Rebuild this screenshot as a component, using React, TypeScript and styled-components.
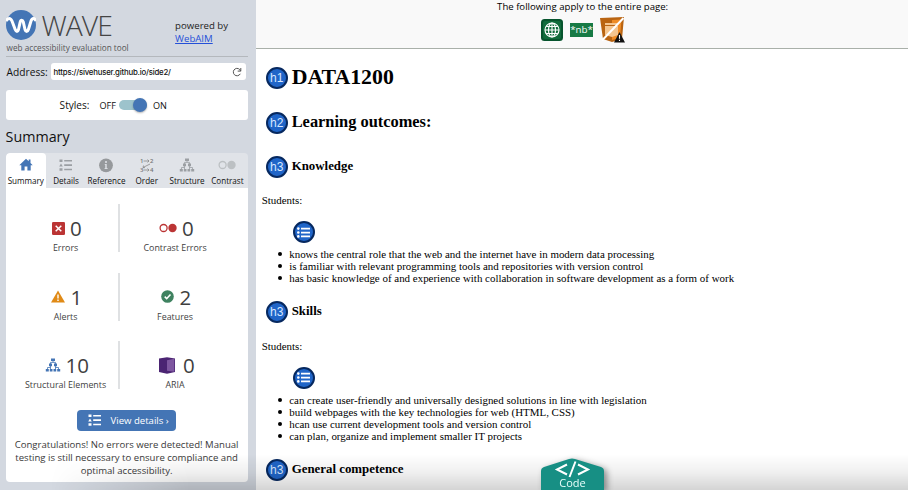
import React from "react";
import styled, { createGlobalStyle } from "styled-components";

const GlobalStyle = createGlobalStyle`
  html, body { margin: 0; padding: 0; overflow: hidden; background: #fff; }
  *, *::before, *::after { box-sizing: border-box; }
`;

const sans = `"Open Sans", "Noto Sans", sans-serif`;

const Page = styled.div`
  position: relative;
  display: flex;
  width: 908px;
  height: 490px;
  overflow: hidden;
  font-family: ${sans};
  color: #111;
`;

const Sidebar = styled.aside`
  flex: 0 0 256px;
  height: 490px;
  padding: 0 8.6px 0 5.6px;
  background: #d3d8e0;
`;

const Header = styled.header`
  display: flex;
  justify-content: space-between;
  height: 57px;
  border-bottom: 1px solid #b4b8bd;
`;

const Brand = styled.div`
  padding-top: 10px;
`;

const LogoRow = styled.div`
  display: flex;
  align-items: center;
  height: 30px;
  gap: 6px;
`;

const Wordmark = styled.span`
  font-weight: 300;
  font-size: 28.3px;
  line-height: 30px;
  letter-spacing: -1px;
  color: #444;
`;

const Tagline = styled.div`
  padding-left: 1px;
  font-size: 8.2px;
  line-height: 15px;
  white-space: nowrap;
  color: #555;
`;

const Powered = styled.div`
  width: 72.5px;
  padding-top: 19px;
  font-size: 9.65px;
  line-height: 13px;
  color: #222;
`;

const AimLink = styled.a`
  color: #2450d8;
  text-decoration: underline;
`;

const AddressRow = styled.div`
  display: flex;
  align-items: center;
  height: 29px;
  padding-left: 1px;
  font-size: 10.2px;
`;

const AddressField = styled.div`
  display: flex;
  align-items: center;
  justify-content: space-between;
  width: 195px;
  height: 17px;
  margin-left: auto;
  margin-right: 2px;
  padding: 0 4px 0 3px;
  border-radius: 3px;
  background: #fff;
  font-family: Inter, sans-serif;
  font-size: 7.8px;
  font-weight: 500;
  letter-spacing: -0.2px;
`;

const StylesBox = styled.div`
  display: flex;
  align-items: center;
  height: 30px;
  margin-top: 4px;
  padding-left: 54px;
  border-radius: 3px;
  background: #fff;
  font-size: 10.1px;
`;

const StateLabel = styled.span<{ $gap: number }>`
  margin-left: ${(p) => p.$gap}px;
  font-size: 9.1px;
`;

const Switch = styled.div`
  display: flex;
  align-items: center;
  justify-content: flex-end;
  width: 28px;
  height: 10px;
  margin-left: 3px;
  border-radius: 5px;
  background: #9dc3cc;
`;

const Knob = styled.div`
  width: 14px;
  height: 14px;
  border-radius: 50%;
  background: #4475b5;
  box-shadow: 0 1px 2px rgba(0, 0, 0, 0.3);
`;

const Title = styled.h2`
  height: 33px;
  margin: 0;
  font-size: 14.3px;
  font-weight: 400;
  line-height: 34px;
`;

const Tabs = styled.nav`
  display: grid;
  grid-template-columns: repeat(6, 1fr);
  height: 35px;
  border-radius: 4px 4px 0 0;
  overflow: hidden;
  background: #e0e3e8;
`;

const Tab = styled.div<{ $active?: boolean }>`
  display: flex;
  flex-direction: column;
  align-items: center;
  padding-top: 4px;
  border-radius: 4px 4px 0 0;
  background: ${(p) => (p.$active ? "#fff" : "transparent")};
  font-size: 8.1px;
  line-height: 12px;
  white-space: nowrap;

  svg {
    margin-bottom: 2px;
  }
`;

const Panel = styled.section`
  height: 294px;
  padding-top: 16px;
  border-radius: 0 0 4px 4px;
  background: #fff;
`;

const Stats = styled.div`
  display: grid;
  grid-template-columns: 114px 128px;
  grid-auto-rows: 48px;
  row-gap: 20.5px;
`;

const Stat = styled.div<{ $left?: boolean }>`
  display: flex;
  flex-direction: column;
  align-items: center;
  padding-top: 10px;
  border-right: ${(p) => (p.$left ? "2px solid #dfe1e3" : "0")};
  padding-left: ${(p) => (p.$left ? "8px" : "0")};
  padding-right: ${(p) => (p.$left ? "0" : "17px")};
  color: #3f3f3f;
`;

const StatValue = styled.div`
  display: flex;
  align-items: center;
  gap: 5px;
  height: 30px;
  padding-left: 2.5px;
  font-size: 20.5px;
  line-height: 28px;
`;

const StatLabel = styled.div`
  font-size: 8.9px;
  line-height: 12px;
  white-space: nowrap;
`;

const DetailsButton = styled.button`
  display: flex;
  align-items: center;
  gap: 7.5px;
  width: 99px;
  height: 21px;
  margin: 20.5px auto 0 71.4px;
  padding: 0 0 0 10px;
  border: 0;
  border-radius: 4px;
  background: #4475b5;
  color: #fff;
  font: 9.6px ${sans};
  white-space: nowrap;
`;

const Message = styled.p`
  margin: 7px 0 0;
  font-size: 9.58px;
  line-height: 13px;
  text-align: center;
  white-space: nowrap;
  color: #3a3a3a;
`;

const Main = styled.main`
  flex: 1;
  height: 490px;
  overflow: hidden;
  background: #fff;
  font-family: "Liberation Serif", "Times New Roman", serif;
  font-size: 10.94px;
  color: #000;
`;

const PageBar = styled.div`
  display: flex;
  flex-direction: column;
  align-items: center;
  height: 49px;
  padding-left: 1px;
  border-bottom: 1px solid #a9b0a9;
  background: #f9f9f9;
  font-family: ${sans};
  font-size: 9.6px;
  line-height: 13px;
`;

const BarIcons = styled.div`
  display: flex;
  align-items: center;
  gap: 7px;
  height: 26px;
  margin-top: 4px;
  padding-left: 1px;
`;

const LangTag = styled.span`
  width: 23px;
  height: 14px;
  background: #177a45;
  color: #fff;
  font-size: 9.8px;
  line-height: 14px;
  text-align: center;
`;

const Heading = styled.div<{ $height: number; $size: number }>`
  display: flex;
  align-items: center;
  gap: 4px;
  height: ${(p) => p.$height}px;
  padding-left: 9.5px;
  font-size: ${(p) => p.$size}px;
  font-weight: 700;
`;

const Badge = styled.span`
  display: flex;
  align-items: center;
  justify-content: center;
  width: 22px;
  height: 22px;
  margin-top: 1.5px;
  border: 2.5px solid #06285f;
  border-radius: 50%;
  background: #2065c8;
  color: #d9e8ff;
  font-family: "Liberation Sans", Arial, sans-serif;
  font-size: 12px;
  font-weight: 400;
  line-height: 16px;
`;

const Paragraph = styled.p`
  height: 14px;
  margin: 0 0 14px;
  padding-left: 5.5px;
  line-height: 14px;
`;

const ListBadge = styled(Badge)`
  margin: 0 0 5px 36.5px;
`;

const List = styled.ul`
  margin: 0;
  padding: 0;
  list-style: none;
`;

const Item = styled.li`
  display: flex;
  align-items: center;
  gap: 7px;
  padding-left: 22px;
  line-height: 12.2px;
  height: 12.2px;

  &::before {
    content: "";
    width: 4px;
    height: 4px;
    border-radius: 50%;
    background: #000;
  }
`;

const BottomShade = styled.div`
  position: absolute;
  left: 0;
  right: 0;
  bottom: 0;
  height: 36px;
  background: linear-gradient(to bottom, rgba(0, 0, 0, 0), rgba(0, 0, 0, 0.06) 50%, rgba(0, 0, 0, 0.17));
  mask-image: linear-gradient(to right, transparent, transparent 50px, #000 190px);
`;

const CodeTab = styled.div`
  position: absolute;
  left: 541px;
  bottom: 0;
  width: 63px;
  height: 32px;
  color: #e8fffb;
  filter: drop-shadow(3px 2px 3px rgba(0, 0, 0, 0.4));

  svg {
    display: block;
  }
`;

const CodeLabel = styled.span`
  position: absolute;
  left: 0;
  right: 0;
  top: 17px;
  text-align: center;
  font-size: 11px;
  line-height: 15px;
`;

const Logo = () => (
  <svg width="30" height="30" viewBox="0 0 30 30">
    <circle cx="15" cy="15" r="15" fill="#4475b5" />
    <path d="M0 11 C2 7.500 4.500 7.500 6 11 L9.200 19.500 C10.200 22 11.800 22 12.500 19.500 L14.200 12 C14.800 9.500 16.600 9.500 17.300 12 L19 19.500 C19.700 22 21.600 22 22.400 19.500 L25 11 C26.200 7.500 28.500 7.500 30 11" fill="none" stroke="#fff" strokeWidth="3" />
  </svg>
);

const Reload = () => (
  <svg width="10" height="10" viewBox="0 0 10 10" fill="none" stroke="#555" strokeWidth="1">
    <path d="M8.600 4.100A3.700 3.700 0 1 0 8.300 6.800M8.800 1V4.100H5.700" />
  </svg>
);

const Bullets = ({ size = 16, color = "#9b9fa3" }: { size?: number; color?: string }) => (
  <svg width={size} height={size} viewBox="0 0 16 16" fill={color}>
    <path d="M1.500 2.500h3v2.500h-3zM3 6.500l1.800 3H1.200zM1.500 11.200h3v2.500h-3zM6.200 2.900H14v1.600H6.200zM6.200 7.300H14v1.600H6.200zM6.200 11.700H14v1.600H6.200z" />
  </svg>
);

const Tree = ({ size = 16, color = "#9b9fa3" }: { size?: number; color?: string }) => (
  <svg width={size} height={size} viewBox="0 0 16 16" fill={color}>
    <path d="M6 1.500h4v2.600H6zM4 6.600h3v2.600H4zM9 6.600h3v2.600H9zM.8 12h3v2.600h-3zM4.800 12h2.700v2.600H4.800zM8.500 12h2.700v2.600H8.500zM12.200 12h3v2.600h-3z" />
    <path d="M8 4v1.400M5.500 7V5.400h5V7M5.500 9v3M10.500 9v3M2.500 12v-1.500h3M13.500 12v-1.500h-3" fill="none" stroke={color} strokeWidth=".8" />
  </svg>
);

const Home = () => (
  <svg width="16" height="16" viewBox="0 0 16 16" fill="#4475b5">
    <path d="M8 1.800 1.300 8.300h2v5.200h3.300V9.500h2.800v4h3.300V8.300h2L12.500 6V2.500h-1.800v1.800z" />
  </svg>
);

const Info = () => (
  <svg width="16" height="16" viewBox="0 0 16 16">
    <circle cx="8" cy="8.300" r="6.900" fill="#96999c" />
    <circle cx="8" cy="5" r="1" fill="#e0e3e8" />
    <path d="M6.700 7h2v4.300h1v.8H6.500v-.8h.8V7.800h-.6z" fill="#e0e3e8" />
  </svg>
);

const Order = () => (
  <svg width="16" height="16" viewBox="0 0 16 16" fill="#777">
    <g fontFamily="Open Sans, sans-serif" fontSize="6" fontWeight="600">
      <text x="1" y="6">1</text>
      <text x="11" y="6">2</text>
      <text x="1" y="15">3</text>
      <text x="11" y="15">4</text>
    </g>
    <path d="M4.500 4h5.500M8.500 2.500 10 4 8.500 5.500M11 7 4 10.500M4.500 8.500 4 10.500l2 .2M4.500 13H10M8.500 11.500 10 13 8.500 14.500" fill="none" stroke="#888" strokeWidth=".8" />
  </svg>
);

const Circles = ({ w = 18, color = "#bcc0c3" }: { w?: number; color?: string }) => (
  <svg width={w} height="16" viewBox="0 0 18 16">
    <circle cx="4.600" cy="8" r="3.500" fill="none" stroke={color} strokeWidth="1.300" />
    <circle cx="13.500" cy="8" r="4.200" fill={color} />
  </svg>
);

const ErrorIcon = () => (
  <svg width="13" height="13" viewBox="0 0 13 13">
    <rect width="13" height="13" rx="1.300" fill="#bb3434" />
    <path d="M3.700 3.700l5.600 5.600M9.300 3.700 3.700 9.300" stroke="#fff" strokeWidth="1.500" />
  </svg>
);

const AlertIcon = () => (
  <svg width="14" height="13" viewBox="0 0 14 13">
    <path d="M7 .5 14 12.500H0z" fill="#e08a16" />
    <path d="M6.300 4.500h1.400v4H6.300zM6.300 9.500h1.400v1.500H6.300z" fill="#fff" />
  </svg>
);

const CheckIcon = () => (
  <svg width="13" height="13" viewBox="0 0 13 13">
    <circle cx="6.500" cy="6.500" r="6.300" fill="#3f8260" />
    <path d="M3.700 6.600l2 2 3.800-4" fill="none" stroke="#fff" strokeWidth="1.500" />
  </svg>
);

const AriaIcon = () => (
  <svg width="20" height="17" viewBox="-1 0 20 17">
    <path d="M0 1.500 8 .3 16 1.500V15L8 16.700 0 15z" fill="#4b2473" />
    <path d="M8 3.200 15.300 1.700V14.800L8 13.800z" fill="#7e57a0" />
  </svg>
);

const Globe = () => (
  <svg width="22" height="22" viewBox="0 0 22 22">
    <rect width="22" height="22" rx="3.500" fill="#07542d" />
    <rect x="2" y="2" width="18" height="18" rx="2" fill="#116b3b" />
    <g fill="none" stroke="#fff" strokeWidth="1.150">
      <circle cx="11" cy="11" r="7" />
      <ellipse cx="11" cy="11" rx="3.500" ry="7" />
      <path d="M11 4v14M4 11h14M5.200 7.500h11.600M5.200 14.500h11.600" />
    </g>
  </svg>
);

const NoScript = () => (
  <svg width="25" height="26" viewBox="0 0 25 26">
    <path d="M0 1 24 0 22 22 12 25 3 22z" fill="#b96412" />
    <path d="M12 3 21.500 2.500 20 21 12 23z" fill="#ef8c26" />
    <path d="M5 6h13v12l-6 2-7-2z" fill="#f4c58f" />
    <path d="M5 8.500h13" stroke="#b96412" />
    <path d="M2 23.500 23.500 1" stroke="#fff" strokeWidth="2" />
    <path d="M19.500 15 25 25.500H14z" fill="#111" />
    <path d="M19.500 18v3.700M19.500 22.800v1.200" stroke="#fff" strokeWidth="1.100" />
  </svg>
);

const ListGlyph = () => (
  <svg width="15" height="15" viewBox="0 0 15 15" fill="#fff">
    <path d="M5 2.800h9v1.700H5zM5 6.700h9v1.700H5zM5 10.600h9v1.700H5z" />
    <circle cx="2.300" cy="3.600" r="1.300" />
    <circle cx="2.300" cy="7.500" r="1.300" />
    <circle cx="2.300" cy="11.400" r="1.300" />
  </svg>
);

const tabs: [string, React.ReactNode][] = [
  ["Summary", <Home />],
  ["Details", <Bullets />],
  ["Reference", <Info />],
  ["Order", <Order />],
  ["Structure", <Tree />],
  ["Contrast", <Circles />],
];

const stats: [string, number, React.ReactNode][] = [
  ["Errors", 0, <ErrorIcon />],
  ["Contrast Errors", 0, <Circles color="#bb3434" />],
  ["Alerts", 1, <AlertIcon />],
  ["Features", 2, <CheckIcon />],
  ["Structural Elements", 10, <Tree color="#4475b5" />],
  ["ARIA", 0, <AriaIcon />],
];

const sections = [
  {
    title: "Knowledge",
    items: [
      "knows the central role that the web and the internet have in modern data processing",
      "is familiar with relevant programming tools and repositories with version control",
      "has basic knowledge of and experience with collaboration in software development as a form of work",
    ],
  },
  {
    title: "Skills",
    items: [
      "can create user-friendly and universally designed solutions in line with legislation",
      "build webpages with the key technologies for web (HTML, CSS)",
      "hcan use current development tools and version control",
      "can plan, organize and implement smaller IT projects",
    ],
  },
];

export default function App() {
  return (
    <Page>
      <GlobalStyle />
      <Sidebar>
        <Header>
          <Brand>
            <LogoRow>
              <Logo />
              <Wordmark>WAVE</Wordmark>
            </LogoRow>
            <Tagline>web accessibility evaluation tool</Tagline>
          </Brand>
          <Powered>
            powered by
            <br />
            <AimLink>WebAIM</AimLink>
          </Powered>
        </Header>
        <AddressRow>
          Address:
          <AddressField>
            https://sivehuser.github.io/side2/
            <Reload />
          </AddressField>
        </AddressRow>
        <StylesBox>
          Styles:
          <StateLabel $gap={10}>OFF</StateLabel>
          <Switch>
            <Knob />
          </Switch>
          <StateLabel $gap={6}>ON</StateLabel>
        </StylesBox>
        <Title>Summary</Title>
        <Tabs>
          {tabs.map(([label, icon], i) => (
            <Tab key={label} $active={i === 0}>
              {icon}
              {label}
            </Tab>
          ))}
        </Tabs>
        <Panel>
          <Stats>
            {stats.map(([label, value, icon], i) => (
              <Stat key={label} $left={i % 2 === 0}>
                <StatValue>
                  {icon}
                  {value}
                </StatValue>
                <StatLabel>{label}</StatLabel>
              </Stat>
            ))}
          </Stats>
          <DetailsButton>
            <Bullets color="#fff" />
            View details ›
          </DetailsButton>
          <Message>
            Congratulations! No errors were detected! Manual
            <br />
            testing is still necessary to ensure compliance and
            <br />
            optimal accessibility.
          </Message>
        </Panel>
      </Sidebar>
      <Main>
        <PageBar>
          The following apply to the entire page:
          <BarIcons>
            <Globe />
            <LangTag>*nb*</LangTag>
            <NoScript />
          </BarIcons>
        </PageBar>
        <Heading $height={56} $size={21.8}>
          <Badge>h1</Badge>DATA1200
        </Heading>
        <Heading $height={34} $size={16.4}>
          <Badge>h2</Badge>Learning outcomes:
        </Heading>
        {sections.map((s) => (
          <section key={s.title}>
            <Heading $height={54} $size={12.87}>
              <Badge>h3</Badge>
              {s.title}
            </Heading>
            <Paragraph>Students:</Paragraph>
            <ListBadge>
              <ListGlyph />
            </ListBadge>
            <List>
              {s.items.map((t) => (
                <Item key={t}>{t}</Item>
              ))}
            </List>
          </section>
        ))}
        <Heading $height={54} $size={12.87}>
          <Badge>h3</Badge>General competence
        </Heading>
      </Main>
      <BottomShade />
      <CodeTab>
        <svg width="63" height="32" viewBox="0 0 63 32">
          <path d="M0 32V13Q0 10 3 9L28 1Q31 0 34 1L60 9Q63 10 63 13V32z" fill="#178f84" />
          <path d="M26 6.500 16 11.500l10 5M37 6.500l10 5-10 5M34.500 3.500 28.500 19" fill="none" stroke="#fff" strokeWidth="2" />
        </svg>
        <CodeLabel>Code</CodeLabel>
      </CodeTab>
    </Page>
  );
}
